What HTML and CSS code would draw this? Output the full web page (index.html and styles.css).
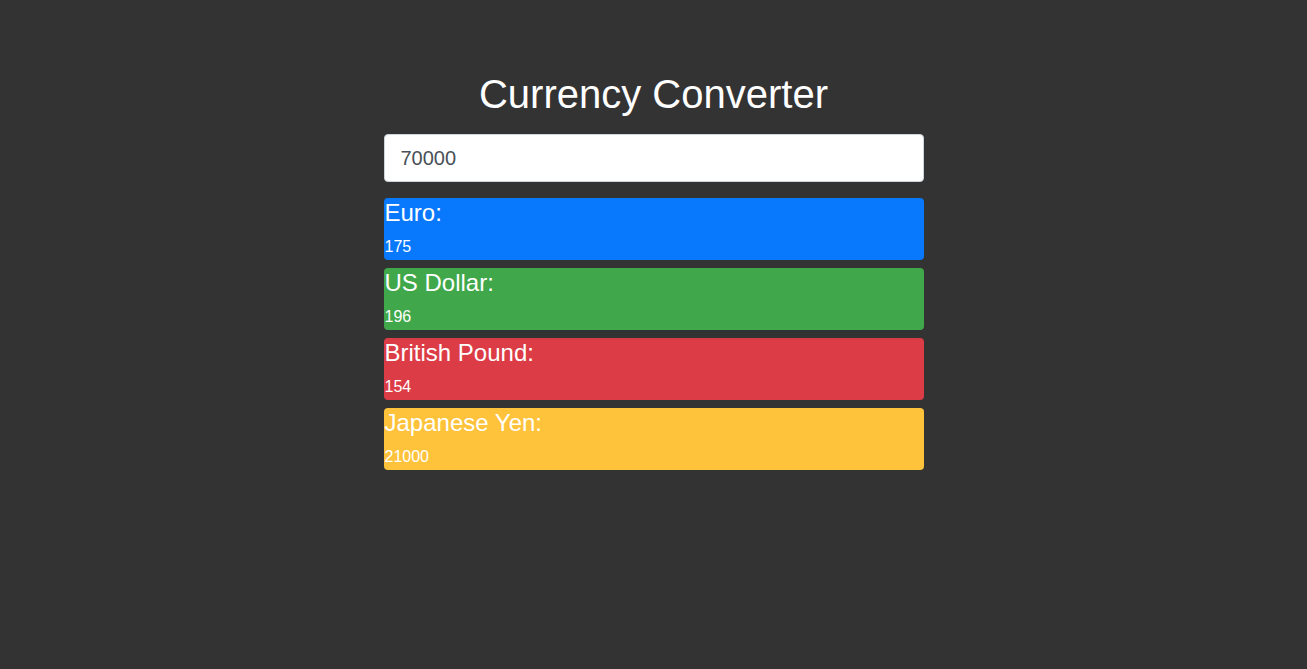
FILE: index.html
```html
<!DOCTYPE html>
<html lang="en">
<head>
<meta charset="utf-8">
<title>Currency Converter</title>
<link rel="stylesheet" href="styles.css">
</head>
<body>
<main class="app">
  <h1 class="title">Currency Converter</h1>
  <input class="amount" type="text" value="70000">
  <div class="results">
    <div class="card card-blue">
      <div class="label">Euro:</div>
      <div class="value">175</div>
    </div>
    <div class="card card-green">
      <div class="label">US Dollar:</div>
      <div class="value">196</div>
    </div>
    <div class="card card-red">
      <div class="label">British Pound:</div>
      <div class="value">154</div>
    </div>
    <div class="card card-yellow">
      <div class="label">Japanese Yen:</div>
      <div class="value">21000</div>
    </div>
  </div>
</main>
</body>
</html>
```
FILE: styles.css
```css
* { box-sizing: border-box; }
html, body {
  margin: 0;
  height: 100%;
  background: #333333;
}
body {
  font-family: "Liberation Sans", Arial, sans-serif;
  color: #ffffff;
}
.app {
  width: 540px;
  margin: 0 auto;
  padding-top: 70px;
  display: flex;
  flex-direction: column;
}
.title {
  margin: 0 0 16px;
  font-size: 40px;
  font-weight: 400;
  line-height: 48px;
  text-align: center;
}
.amount {
  display: block;
  width: 100%;
  height: 48px;
  padding: 8px 16px;
  font-family: inherit;
  font-size: 20px;
  color: #495057;
  background: #ffffff;
  border: 1px solid #ced4da;
  border-radius: 4px;
  margin: 0 0 16px;
  outline: none;
}
.results {
  display: flex;
  flex-direction: column;
  gap: 8px;
}
.card {
  height: 62px;
  border-radius: 4px;
  padding: 0 1px;
}
.label {
  font-size: 24px;
  line-height: 30px;
  margin-bottom: 7px;
}
.value {
  font-size: 16px;
  line-height: 24px;
}
.card-blue { background: #0878fc; }
.card-green { background: #40a84a; }
.card-red { background: #dc3c45; }
.card-yellow { background: #fec33a; }
```
